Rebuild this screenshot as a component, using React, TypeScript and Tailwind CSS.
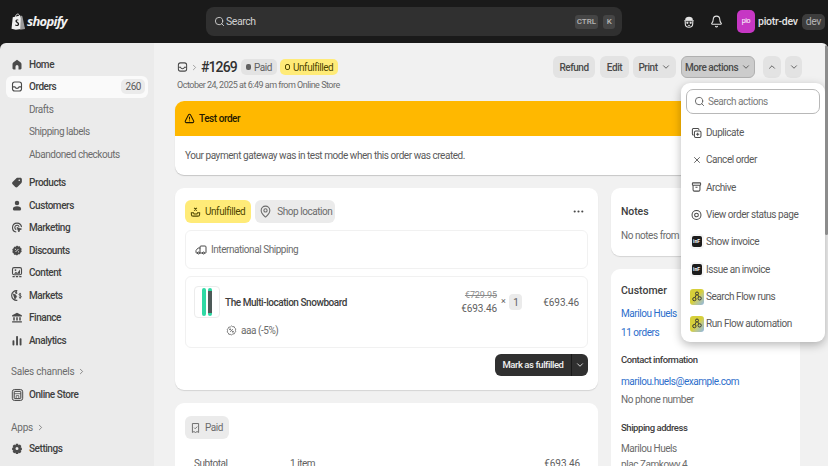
import { Bell, ChevronDown, ChevronRight, ChevronUp, MapPin, MoreHorizontal, Search, Truck, X } from "lucide-react";
import type { ReactNode } from "react";

type Ico = { className?: string };

const HomeIcon = ({ className }: Ico) => (
  <svg viewBox="0 0 16 16" className={className} fill="currentColor">
    <path d="M8 1.500 3 5.200c-.6.500-1 1.200-1 2V13c0 .9.700 1.500 1.500 1.500H6v-3.800a2 2 0 0 1 4 0v3.800h2.500c.8 0 1.500-.6 1.500-1.500V7.200c0-.8-.4-1.500-1-2z" />
  </svg>
);
const OrdersIcon = ({ className }: Ico) => (
  <svg viewBox="0 0 16 16" className={className} fill="none" stroke="currentColor" strokeWidth="1.500">
    <rect x="2" y="2" width="12" height="12" rx="3" />
    <path d="M2 8.500h3.200c.4 1.200 1.500 2 2.800 2s2.400-.8 2.800-2H14" />
  </svg>
);
const ProductsIcon = ({ className }: Ico) => (
  <svg viewBox="0 0 16 16" className={className} fill="currentColor">
    <path d="M9 1.500h3.500c1.100 0 2 .9 2 2V7c0 .6-.2 1.100-.6 1.500l-5.300 5.400c-.8.8-2.100.8-2.900 0l-3.600-3.600c-.8-.8-.8-2.100 0-2.900l5.400-5.300c.4-.4.900-.6 1.500-.6z" />
    <circle cx="11" cy="5" r="1.100" fill="#ebebeb" />
  </svg>
);
const CustomersIcon = ({ className }: Ico) => (
  <svg viewBox="0 0 16 16" className={className} fill="currentColor">
    <circle cx="8" cy="4.500" r="3" />
    <path d="M2.500 12.500c0-2.200 2-3.500 5.500-3.500s5.500 1.300 5.500 3.500c0 1.200-.8 2-2 2h-7c-1.200 0-2-.8-2-2z" />
  </svg>
);
const MarketingIcon = ({ className }: Ico) => (
  <svg viewBox="0 0 16 16" className={className} fill="none" stroke="currentColor" strokeWidth="1.500">
    <path d="M7 14a6 6 0 1 1 7-6.500" />
    <path d="M7 10.800A3 3 0 1 1 10.900 7" />
    <path d="m8 8 6 2-2.500 1.200L10.500 14z" fill="currentColor" strokeWidth="1" />
  </svg>
);
const DiscountsIcon = ({ className, stroke }: Ico & { stroke?: boolean }) => (
  <svg viewBox="0 0 16 16" className={className} fill={stroke ? "none" : "currentColor"} stroke={stroke ? "currentColor" : "none"} strokeWidth="1.200">
    <path d="M8 1.300 9.800 2.500l2.100-.1.700 2 1.700 1.300-.6 2 .6 2-1.700 1.300-.7 2-2.100-.1L8 14.700l-1.800-1.200-2.100.1-.7-2-1.700-1.300.6-2-.6-2 1.700-1.300.7-2 2.100.1z" />
    <path d="m6 10 4-4" stroke={stroke ? "currentColor" : "#ebebeb"} strokeWidth="1.200" />
    <circle cx="6" cy="6.300" r=".8" fill={stroke ? "currentColor" : "#ebebeb"} />
    <circle cx="10" cy="9.700" r=".8" fill={stroke ? "currentColor" : "#ebebeb"} />
  </svg>
);
const ContentIcon = ({ className }: Ico) => (
  <svg viewBox="0 0 16 16" className={className}>
    <rect x="2" y="1.500" width="12" height="9.500" rx="2" fill="none" stroke="currentColor" strokeWidth="1.500" />
    <path d="M4 9.500 6.500 7l2 1.500L12 4v5.500z" fill="currentColor" />
    <circle cx="6" cy="4.800" r="1.200" fill="currentColor" />
    <path d="M2 13.500h3M6.500 13.500h3M11 13.500h3" stroke="currentColor" strokeWidth="1.500" />
  </svg>
);
const MarketsIcon = ({ className }: Ico) => (
  <svg viewBox="0 0 16 16" className={className} fill="none" stroke="currentColor" strokeWidth="1.500">
    <path d="M8.500 1.600A6.500 6.500 0 1 0 8.500 14.400" />
    <path d="M2.500 6 6 7l1.500 2.500-1.500 2-1 2.300M7 2 5.500 4.500 8 5.500z" fill="currentColor" strokeWidth="1" />
    <path d="M13.500 6.200c-.6-.8-2.800-1-2.800.5s3.100 1.100 3.100 2.800-2.500 1.500-3.300.5M12.200 4.500v8" strokeWidth="1.200" />
  </svg>
);
const FinanceIcon = ({ className }: Ico) => (
  <svg viewBox="0 0 16 16" className={className} fill="currentColor">
    <path d="M8 1.500 14.500 5v1.500h-13V5z" />
    <path d="M3 7.500h2v4.500H3zM7 7.500h2v4.500H7zM11 7.500h2v4.500h-2zM1.500 13h13v1.500h-13z" />
  </svg>
);
const AnalyticsIcon = ({ className }: Ico) => (
  <svg viewBox="0 0 16 16" className={className} fill="currentColor">
    <rect x="2" y="7.500" width="2.500" height="7" rx="1" />
    <rect x="6.800" y="2" width="2.500" height="12.500" rx="1" />
    <rect x="11.500" y="5" width="2.500" height="9.500" rx="1" />
  </svg>
);
const StoreIcon = ({ className }: Ico) => (
  <svg viewBox="0 0 20 20" className={className} fill="none" stroke="currentColor" strokeWidth="1.500">
    <rect x="2" y="1.500" width="16" height="17" rx="3.500" fill="#d4d4d4" />
    <rect x="5" y="4.500" width="10" height="11" rx="1" fill="#ebebeb" />
    <path d="M5 8h10M8 15.500V11h4v4.500" strokeWidth="1.200" />
  </svg>
);
const SettingsIcon = ({ className }: Ico) => (
  <svg viewBox="0 0 16 16" className={className} fill="currentColor">
    <path fillRule="evenodd" d="M6.500 1.500h3l.5 2 1.800-.9 2 2.100-.9 1.800 1.600.5v3l-1.600.5.9 1.800-2 2.100-1.800-.9-.5 1.900h-3l-.5-1.900-1.800.9-2-2.100.9-1.800-1.600-.5v-3l1.600-.5-.9-1.800 2-2.100 1.800.9zM8 6a2 2 0 1 0 0 4 2 2 0 0 0 0-4z" />
  </svg>
);
const ShopifyBag = () => (
  <svg viewBox="0 0 16 19" className="h-[17px] w-[14px] shrink-0">
    <path d="M2 4.500 10.500 2.500 15.500 17.500 5.500 19 .6 17.800z" fill="#f1f1f1" />
    <path d="M5 5c0-2 1.200-4 2.600-4S10 2.500 10 4.500" fill="none" stroke="#f1f1f1" strokeWidth="1" />
    <path d="M11.300 2.500 13 3.500l3 14.500-5.500 1z" fill="#9a9a9a" />
    <path d="M8.500 7.500c-1.500-.7-3.500 0-3.500 1.500 0 2 2.800 2 2.800 3.500 0 1.200-1.800 1-2.800.3l-.4 1.400c1.500 1 4.700.8 4.700-1.900 0-2.300-2.700-2.400-2.700-3.500 0-.6 1-.8 1.700-.4z" fill="#1a1a1a" />
  </svg>
);
const MaskIcon = () => (
  <svg viewBox="0 0 16 16" className="h-[14px] w-[12px] shrink-0">
    <path d="M3 6V4.500C3 2.500 5 1 8 1s5 1.500 5 3.500V6z" fill="#e3e3e3" />
    <rect x="1.500" y="5.500" width="13" height="1.500" rx=".7" fill="#e3e3e3" />
    <path d="M3 7v3c0 3 2 5 5 5s5-2 5-5V7" fill="none" stroke="#e3e3e3" strokeWidth="1.500" />
    <circle cx="5.800" cy="9" r="1.500" fill="#e3e3e3" />
    <circle cx="10.200" cy="9" r="1.500" fill="#e3e3e3" />
    <path d="M6.500 12.500h3" stroke="#e3e3e3" strokeWidth="1.200" />
  </svg>
);
const WarnIcon = () => (
  <svg viewBox="0 0 16 16" className="h-[13px] w-[11px] text-[#251a00]" fill="none" stroke="currentColor" strokeWidth="1.500">
    <path d="M6.600 2.500c.6-1 2.200-1 2.800 0l4.700 9c.5 1.100-.2 2.500-1.500 2.500H3.400c-1.300 0-2-1.400-1.500-2.500z" />
    <path d="M8 5.500v4M8 11v1" />
  </svg>
);
const DuplicateIcon = () => (
  <svg viewBox="0 0 16 16" className="h-[12px] w-[11px]" fill="none" stroke="currentColor" strokeWidth="1.500">
    <path d="M11.500 3.500V3a1.500 1.500 0 0 0-1.500-1.500H3.500A1.500 1.500 0 0 0 2 3v6.500A1.500 1.500 0 0 0 3.500 11H4" />
    <rect x="5" y="5" width="9.500" height="9.500" rx="2" />
    <path d="M9.700 7.500v4.500M7.500 9.700H12" />
  </svg>
);
const ArchiveIcon = () => (
  <svg viewBox="0 0 16 16" className="h-[12px] w-[11px]" fill="none" stroke="currentColor" strokeWidth="1.500">
    <rect x="2" y="2" width="12" height="3.500" rx="1" />
    <path d="M3 5.500V12c0 1.200.8 2 2 2h6c1.200 0 2-.8 2-2V5.500M6.500 8.500h3" />
  </svg>
);
const EyeRingIcon = () => (
  <svg viewBox="0 0 16 16" className="h-[12px] w-[11px]" fill="none" stroke="currentColor" strokeWidth="1.500">
    <circle cx="8" cy="8" r="6.500" />
    <circle cx="8" cy="8" r="2.700" />
  </svg>
);
const InvoiceApp = () => (
  <span className="flex h-[11px] w-[10px] items-center justify-center rounded-[2px] bg-[#1c1c1c] text-[5px] font-bold leading-none tracking-normal text-white shadow-[0_0_0_2px_#f6f6f6]">
    inF
  </span>
);
const FlowApp = () => (
  <span className="flex h-[16px] w-[14px] items-center justify-center rounded-[3px] bg-gradient-to-br from-[#d6cf3a] from-50% to-[#8fb4e0]">
    <svg viewBox="0 0 16 16" className="h-[13px] w-[12px]" fill="none" stroke="#333" strokeWidth="1.300">
      <circle cx="8" cy="4" r="2" />
      <circle cx="4.500" cy="11.500" r="2.200" />
      <circle cx="11.500" cy="10.500" r="2.200" />
      <path d="M7 5.800 5.200 9.500M9 5.800l1.500 2.700" />
    </svg>
  </span>
);
const SnowboardThumb = () => (
  <span className="flex h-[32px] w-[26px] shrink-0 items-center justify-center gap-[1.500px] rounded-[4px] border border-[#ececec] bg-white">
    <span className="h-[28px] w-[4px] rounded-full bg-[#2fd9a4]" />
    <span className="flex h-[28px] w-[4px] items-center justify-center rounded-full bg-[#2fd9a4]">
      <span className="h-[22px] w-[4px] bg-[#4d5a58]" />
    </span>
  </span>
);

function NavItem({ icon, label, sub, active, badge }: { icon?: ReactNode; label: string; sub?: boolean; active?: boolean; badge?: string }) {
  return (
    <div className={`mx-[6px] flex h-[22.500px] items-center rounded-[6px] pr-[3px] ${active ? "bg-[#fafafa]" : ""}`}>
      <span className="flex w-[23px] shrink-0 justify-center pr-[1px] text-[#4a4a4a]">{icon}</span>
      <span className={`text-[10px] ${sub ? "text-[#6b6b6b]" : "font-medium text-[#404040]"}`}>{label}</span>
      {badge && <span className="ml-auto flex h-[15px] items-center rounded-[5px] bg-[#ebebeb] px-[4px] text-[10px] text-[#5c5c5c]">{badge}</span>}
    </div>
  );
}

function ActionBtn({ children, className = "" }: { children: ReactNode; className?: string }) {
  return <div className={`flex h-[22px] shrink-0 items-center justify-center whitespace-nowrap rounded-[6px] text-[10px] font-medium text-[#4a4a4a] ${className}`}>{children}</div>;
}

function MenuRow({ icon, label }: { icon: ReactNode; label: string }) {
  return (
    <div className="flex h-[27.330px] items-center text-[#4a4a4a]">
      <span className="ml-[1px] flex w-[15px] shrink-0 justify-center">{icon}</span>
      <span className="ml-[2px] whitespace-nowrap text-[10px] text-[#5a5a5a]">{label}</span>
    </div>
  );
}

const iconCls = "h-[13px] w-[12px]";

export default function App() {
  return (
    <div className="flex h-[466px] w-[828px] flex-col overflow-hidden bg-[#1a1a1a] font-['Roboto',sans-serif] tracking-[-0.45px]">
      {/* Top bar */}
      <header className="flex h-[43px] shrink-0 items-center pl-[11px] pr-[9px]">
        <div className="flex w-[195px] shrink-0 items-center gap-[2px]">
          <ShopifyBag />
          <span className="font-['Open_Sans',sans-serif] text-[13px] font-bold italic tracking-[-0.7px] text-[#f1f1f1]">shopify</span>
        </div>
        <div className="flex h-[29px] w-[416px] shrink-0 items-center rounded-[8px] bg-[#303030] pl-[8px] pr-[7px]">
          <Search size={11} className="text-[#d0d0d0]" />
          <span className="ml-[1px] text-[10.500px] text-[#d0d0d0]">Search</span>
          <span className="ml-auto flex h-[14px] items-center rounded-[3px] bg-[#454545] px-[2px] text-[8px] font-medium tracking-normal text-[#b5b5b5]">CTRL</span>
          <span className="ml-[5px] flex h-[14px] w-[12px] items-center justify-center rounded-[3px] bg-[#454545] text-[8px] font-medium text-[#b5b5b5]">K</span>
        </div>
        <span className="ml-[61px]"><MaskIcon /></span>
        <Bell size={13} className="ml-[15px] shrink-0 text-[#e3e3e3]" />
        <span className="ml-[14px] flex h-[23px] w-[18px] shrink-0 items-center justify-center rounded-[5px] bg-[#c637c4] text-[7px] text-white">pio</span>
        <span className="ml-[3px] whitespace-nowrap text-[10.500px] font-medium tracking-[-0.25px] text-[#e3e3e3]">piotr-dev</span>
        <span className="ml-[4px] flex h-[16px] w-[23px] shrink-0 items-center justify-center rounded-[5px] bg-[#3d3d3d] text-[10.500px] text-[#b0b0b0]">dev</span>
      </header>

      <div className="flex min-h-0 flex-1 overflow-hidden rounded-t-[6px]">
        {/* Sidebar */}
        <aside className="flex w-[154px] shrink-0 flex-col bg-[#ebebeb] pt-[10px]">
          <NavItem icon={<HomeIcon className={iconCls} />} label="Home" />
          <NavItem icon={<OrdersIcon className={iconCls} />} label="Orders" active badge="260" />
          <NavItem label="Drafts" sub />
          <NavItem label="Shipping labels" sub />
          <NavItem label="Abandoned checkouts" sub />
          <div className="h-[6px]" />
          <NavItem icon={<ProductsIcon className={iconCls} />} label="Products" />
          <NavItem icon={<CustomersIcon className={iconCls} />} label="Customers" />
          <NavItem icon={<MarketingIcon className={iconCls} />} label="Marketing" />
          <NavItem icon={<DiscountsIcon className={iconCls} />} label="Discounts" />
          <NavItem icon={<ContentIcon className={iconCls} />} label="Content" />
          <NavItem icon={<MarketsIcon className={iconCls} />} label="Markets" />
          <NavItem icon={<FinanceIcon className={iconCls} />} label="Finance" />
          <NavItem icon={<AnalyticsIcon className={iconCls} />} label="Analytics" />
          <div className="mt-[12px] flex h-[15px] items-center pl-[11px] text-[10px] tracking-[-0.25px] text-[#6b6b6b]">
            Sales channels <ChevronRight size={9} className="ml-[3px]" />
          </div>
          <div className="h-[5px]" />
          <NavItem icon={<StoreIcon className="h-[14px] w-[13px]" />} label="Online Store" />
          <div className="mt-[15px] flex h-[13px] items-center pl-[11px] text-[10px] tracking-[-0.25px] text-[#6b6b6b]">
            Apps <ChevronRight size={9} className="ml-[3px]" />
          </div>
          <div className="h-[3px]" />
          <NavItem icon={<SettingsIcon className={iconCls} />} label="Settings" />
        </aside>

        {/* Main */}
        <main className="relative min-w-0 flex-1 overflow-hidden bg-[#f1f1f1] pl-[21px] pr-[28px] pt-[13px]">
          <div className="flex h-[22px] items-center pl-[2px]">
            <OrdersIcon className="h-[12px] w-[11px] shrink-0 text-[#4a4a4a]" />
            <ChevronRight size={9} className="ml-[2px] shrink-0 text-[#8a8a8a]" />
            <span className="ml-[2px] w-[35px] text-[14px] font-medium tracking-[-0.9px] text-[#303030]">#1269</span>
            <span className="ml-[5px] flex h-[16px] w-[36px] items-center gap-[3px] rounded-[5px] bg-[#e3e3e3] pl-[5px] text-[10px] text-[#616161]">
              <span className="h-[6px] w-[5px] rounded-[2px] bg-[#616161]" />
              Paid
            </span>
            <span className="ml-[3px] flex h-[16px] w-[58px] items-center gap-[3px] rounded-[5px] bg-[#ffeb78] pl-[5px] text-[10px] text-[#4f4700]">
              <span className="h-[6px] w-[5px] rounded-[2px] border border-[#4f4700]" />
              Unfulfilled
            </span>
            <div className="-mr-[2px] ml-auto flex items-center">
              <ActionBtn className="w-[42px] bg-[#e3e3e3]">Refund</ActionBtn>
              <ActionBtn className="ml-[5px] w-[29px] bg-[#e3e3e3]">Edit</ActionBtn>
              <ActionBtn className="ml-[4px] w-[43px] gap-[3px] bg-[#e3e3e3]">Print <ChevronDown size={10} /></ActionBtn>
              <ActionBtn className="ml-[5px] w-[74px] gap-[3px] border border-[#b0b0b0] bg-[#cccccc]">More actions <ChevronDown size={10} /></ActionBtn>
              <ActionBtn className="ml-[8px] w-[18px] bg-[#e3e3e3]"><ChevronUp size={10} /></ActionBtn>
              <ActionBtn className="ml-[4px] w-[17px] bg-[#e3e3e3]"><ChevronDown size={10} /></ActionBtn>
            </div>
          </div>
          <p className="mt-[1px] pl-[2px] text-[9px] leading-[13px] tracking-[-0.5px] text-[#6b6b6b]">October 24, 2025 at 6:49 am from Online Store</p>

          {/* Test order banner */}
          <section className="mt-[9px] overflow-hidden rounded-[9px] bg-white shadow-[0_1px_1px_rgba(0,0,0,0.18)]">
            <div className="flex h-[35px] items-center gap-[4px] bg-[#ffb800] pl-[9px] text-[10px] font-medium text-[#251a00]">
              <WarnIcon />
              Test order
            </div>
            <div className="flex h-[39px] items-center pl-[10px] text-[10px] text-[#5a5a5a]">Your payment gateway was in test mode when this order was created.</div>
          </section>

          <div className="mt-[13px] flex items-start gap-[13px]">
            {/* Left column */}
            <div className="flex w-[423px] shrink-0 flex-col gap-[13px]">
              <section className="h-[202px] rounded-[9px] bg-white px-[10px] pt-[12px] shadow-[0_1px_1px_rgba(0,0,0,0.12)]">
                <div className="flex items-center">
                  <span className="flex h-[23px] items-center gap-[4px] rounded-[6px] bg-[#ffeb78] pl-[5px] pr-[6px] text-[10px] text-[#4f4700]">
                    <svg viewBox="0 0 16 16" className="h-[12px] w-[11px]" fill="none" stroke="currentColor" strokeWidth="1.500">
                      <path d="M2 9h3l1 2h4l1-2h3v2.500c0 1.500-1 2.500-2.500 2.500h-7C3 14 2 13 2 11.500z" />
                      <path d="m6 2 4 4M10 2 6 6" />
                    </svg>
                    Unfulfilled
                  </span>
                  <span className="ml-[4px] flex h-[23px] w-[80px] items-center gap-[5px] rounded-[6px] bg-[#ebebeb] pl-[4px] text-[10px] text-[#6b6b6b]">
                    <MapPin size={13} />
                    Shop location
                  </span>
                  <MoreHorizontal size={13} className="ml-auto mr-[3px] text-[#4a4a4a]" />
                </div>
                <div className="mt-[7px] flex h-[39px] items-center gap-[4px] rounded-[6px] border border-[#f1f1f1] pl-[9px] text-[10px] text-[#6b6b6b]">
                  <Truck size={12} className="scale-x-[-1] text-[#4a4a4a]" />
                  International Shipping
                </div>
                <div className="mt-[7px] h-[72px] rounded-[6px] border border-[#f1f1f1] pl-[8px] pr-[8px] pt-[9px]">
                  <div className="flex items-center">
                    <SnowboardThumb />
                    <span className="ml-[5px] text-[10px] font-medium text-[#404040]">The Multi-location Snowboard</span>
                    <div className="ml-auto flex flex-col items-end text-[10px] leading-[13px] tracking-[-0.1px] text-[#616161]">
                      <span className="text-[9px] text-[#8a8a8a] line-through">€729.95</span>
                      <span>€693.46</span>
                    </div>
                    <span className="ml-[4px] text-[9px] text-[#616161]">×</span>
                    <span className="ml-[4px] flex h-[16px] w-[13px] items-center justify-center rounded-[4px] bg-[#ebebeb] text-[10px] text-[#616161]">1</span>
                    <span className="ml-[21px] text-[10px] tracking-[-0.1px] text-[#616161]">€693.46</span>
                  </div>
                  <div className="mt-[5px] flex items-center gap-[4px] pl-[32px] text-[10px] text-[#6b6b6b]">
                    <DiscountsIcon stroke className="h-[11px] w-[11px]" />
                    aaa (-5%)
                  </div>
                </div>
                <div className="mt-[6px] flex justify-end">
                  <div className="flex h-[22px] w-[93px] items-center rounded-[6px] bg-[#303030] text-[9.500px] font-medium text-[#f1f1f1]">
                    <span className="flex flex-1 justify-center">Mark as fulfilled</span>
                    <span className="flex h-full w-[17px] items-center justify-center border-l border-[#1a1a1a]">
                      <ChevronDown size={10} />
                    </span>
                  </div>
                </div>
              </section>

              <section className="h-[100px] rounded-[9px] bg-white px-[10px] pt-[13px]">
                <span className="inline-flex h-[23px] items-center gap-[4px] rounded-[6px] bg-[#ebebeb] pl-[5px] pr-[6px] text-[10px] text-[#6b6b6b]">
                  <svg viewBox="0 0 16 16" className="h-[12px] w-[11px]" fill="none" stroke="currentColor" strokeWidth="1.400">
                    <path d="M3.500 1.500h9v13l-2.200-1.300L8 14.500l-2.300-1.300-2.200 1.300z" />
                    <path d="m6 7.500 1.500 1.500L10.500 6" />
                  </svg>
                  Paid
                </span>
                <div className="mt-[16px] flex h-[13px] items-center rounded-t-[6px] pl-[9px] pr-[8px] text-[10px] text-[#616161]">
                  <span className="w-[96px]">Subtotal</span>
                  <span>1 item</span>
                  <span className="ml-auto tracking-[-0.1px]">€693.46</span>
                </div>
              </section>
            </div>

            {/* Right column */}
            <div className="flex min-w-0 flex-1 flex-col gap-[13px]">
              <section className="flex h-[68px] flex-col rounded-[9px] bg-white pl-[10px] pt-[17px] shadow-[0_1px_1px_rgba(0,0,0,0.12)]">
                <h3 className="text-[10.500px] font-medium leading-[14px] tracking-[-0.1px] text-[#404040]">Notes</h3>
                <p className="mt-[10px] text-[10px] leading-[14px] text-[#6b6b6b]">No notes from</p>
              </section>
              <section className="h-[220px] rounded-[9px] bg-white pl-[10px] pt-[15px]">
                <h3 className="text-[10.500px] font-medium leading-[14px] tracking-normal text-[#404040]">Customer</h3>
                <p className="mt-[9px] text-[10px] leading-[14px] text-[#2c6ecb]">Marilou Huels</p>
                <p className="mt-[5px] text-[10px] leading-[14px] text-[#2c6ecb]">11 orders</p>
                <h4 className="mt-[13px] text-[9.500px] font-medium leading-[14px] text-[#404040]">Contact information</h4>
                <p className="mt-[8px] text-[10px] leading-[14px] text-[#2c6ecb]">marilou.huels@example.com</p>
                <p className="mt-[4px] text-[10px] leading-[14px] text-[#6b6b6b]">No phone number</p>
                <h4 className="mt-[14px] text-[9.500px] font-medium leading-[14px] text-[#404040]">Shipping address</h4>
                <p className="mt-[7px] text-[10px] leading-[14px] text-[#6b6b6b]">Marilou Huels</p>
                <p className="mt-[2px] text-[10px] leading-[14px] text-[#6b6b6b]">plac Zamkowy 4</p>
              </section>
            </div>
          </div>

          {/* More actions menu */}
          <div className="absolute right-[3px] top-[40px] h-[259px] w-[144px] rounded-[9px] bg-white px-[5px] pt-[6px] shadow-[0_3px_10px_rgba(0,0,0,0.28)]">
            <div className="flex h-[25px] items-center gap-[3px] rounded-[7px] border border-[#b8b8b8] pl-[7px] text-[10px] text-[#7a7a7a]">
              <Search size={11} className="text-[#616161]" />
              Search actions
            </div>
            <div className="mt-[5px] pl-[2px]">
              <MenuRow icon={<DuplicateIcon />} label="Duplicate" />
              <MenuRow icon={<X size={10} />} label="Cancel order" />
              <MenuRow icon={<ArchiveIcon />} label="Archive" />
              <MenuRow icon={<EyeRingIcon />} label="View order status page" />
              <MenuRow icon={<InvoiceApp />} label="Show invoice" />
              <MenuRow icon={<InvoiceApp />} label="Issue an invoice" />
              <MenuRow icon={<FlowApp />} label="Search Flow runs" />
              <MenuRow icon={<FlowApp />} label="Run Flow automation" />
            </div>
          </div>

          {/* Page scrollbar */}
          <div className="absolute right-0 top-[2px] h-[190px] w-[3px] rounded-full bg-[#8c8c8c]" />
        </main>
      </div>
    </div>
  );
}
